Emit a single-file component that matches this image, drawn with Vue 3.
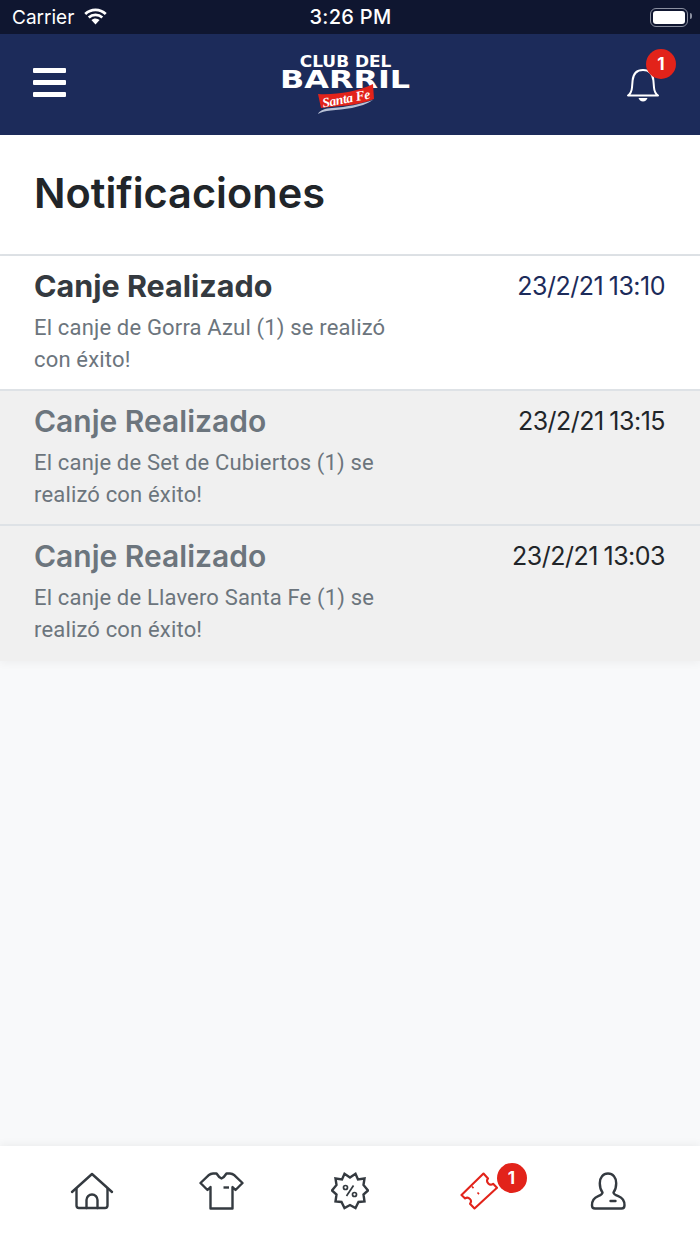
<template>
  <div class="screen">
    <div class="status">
      <div class="status-left">
        <span>Carrier</span>
        <svg width="27" height="18" viewBox="0 0 26 18"><path d="M13 3.200c3.600 0 6.900 1.400 9.300 3.700l1.900-2A16.400 16.400 0 0 0 13 .4 16.400 16.400 0 0 0 1.800 4.900l1.900 2A13.500 13.500 0 0 1 13 3.200z" fill="#fff"/><path d="M13 8.300c2.200 0 4.200.8 5.800 2.200l1.900-2A11.400 11.400 0 0 0 13 5.500a11.400 11.400 0 0 0-7.700 3l1.900 2A8.600 8.600 0 0 1 13 8.300z" fill="#fff"/><path d="M13 10.600c-1.600 0-3 .6-4.100 1.500l4.100 4.300 4.100-4.300A6.200 6.200 0 0 0 13 10.600z" fill="#fff"/></svg>
      </div>
      <span class="status-time">3:26 PM</span>
      <div class="battery"><div class="battery-fill" /><i class="battery-nub" /></div>
    </div>

    <header class="topbar">
      <div class="burger"><i /><i /><i /></div>
      <div class="logo">
        <div class="logo-small">CLUB DEL</div>
        <div class="logo-big">BARRIL</div>
        <div class="logo-flag">
          <svg width="58" height="31" viewBox="0 0 58 31">
            <path d="M1 10 C18 11 40 8 56 0 L57 15 C42 22 18 22 4 24 Z" fill="#e2231a" />
            <path d="M1 30 C3 26 8 24.500 15 24 C30 23 44 20 56 16 C44 24 26 25.500 14 26.500 C8 27 4 28 1 30 Z" fill="#b9c2d6" />
          </svg>
          <span class="logo-santa">Santa Fe</span>
        </div>
      </div>
      <div class="bell">
        <svg width="36" height="38" viewBox="0 0 36 38" fill="none">
          <path d="M3 30.500h30c-2.600-1.800-3.700-4-4-8l-.6-7C27.800 9 24 5 18 5S8.200 9 7.600 15.500l-.6 7c-.3 4-1.400 6.200-4 8z" stroke="#fff" stroke-width="2" stroke-linejoin="round" />
          <path d="M13.500 33h9c-.5 2-2.300 3.400-4.500 3.400s-4-1.400-4.500-3.400z" fill="#fff" />
        </svg>
        <span class="badge bell-badge">1</span>
      </div>
    </header>

    <div class="title-box">
      <h1>Notificaciones</h1>
    </div>

    <div class="list">
      <div v-for="n in notifications" :key="n.date" :class="['item', { read: n.read }]">
        <div class="item-text">
          <div class="item-title">{{ n.title }}</div>
          <div class="item-body">{{ n.body }}</div>
        </div>
        <div class="item-date">{{ n.date }}</div>
      </div>
    </div>

    <div class="spacer" />

    <nav class="tabs">
      <div class="tab">
        <svg width="44" height="38" viewBox="0 0 44 38" fill="none" stroke="#343a40" stroke-width="2.400" stroke-linecap="round" stroke-linejoin="round">
          <path d="M2 20 22 2l20 18" />
          <path d="M6.500 17v16.500c0 1.500 1 2.500 2.500 2.500h26c1.500 0 2.500-1 2.500-2.500V17" />
          <path d="M16.500 36v-8a5.500 5.500 0 0 1 11 0v8" />
        </svg>
      </div>
      <div class="tab">
        <svg width="45" height="38" viewBox="0 0 45 38" fill="none" stroke="#343a40" stroke-width="2.400" stroke-linejoin="round">
          <path d="M14 1.500h3.500c1 1.600 2.800 4 5 5 2.200-1 4-3.400 5-5H31c1.800 0 3 .6 4.500 1.800L43.500 11 36.500 18l-3-3v21.500h-22V15l-3 3L1.500 11l8-7.700C11 2.100 12.200 1.500 14 1.500z" />
          <path d="M24.500 15.500h5.500" stroke-width="2.400" />
        </svg>
      </div>
      <div class="tab">
        <svg width="38" height="38" viewBox="0 0 38 38" fill="none" stroke="#343a40" stroke-width="2.400" stroke-linejoin="miter">
          <path d="M19 5.500 24.500 1.800 27 7.500 33.500 6.500 32.500 13 37 18.500 32.500 22.500 33.500 29.500 27.500 30 24.500 36 19 33 13.500 36 10.500 30 4.500 29.500 5.500 22.500 1 18.500 5.500 13 4.500 6.500 11 7.500 13.500 1.800Z" />
          <path d="m15.500 24 7-10.500" stroke-width="1.700" />
          <circle cx="14.500" cy="15.500" r="2" stroke-width="1.700" />
          <circle cx="23.500" cy="22.500" r="2" stroke-width="1.700" />
        </svg>
      </div>
      <div class="tab">
        <svg width="38" height="38" viewBox="0 0 38 38" fill="none" stroke="#e2231a" stroke-width="2.100" stroke-linejoin="round">
          <path d="M1.500 23 23.500 1.500l4.500 5c-1.400 1.700-1.200 3.400.3 4.900 1.400 1.400 3.100 1.600 4.800.4l3.900 4L14.500 36.500 10 31.800c1.400-1.700 1.300-3.400-.1-4.900-1.400-1.400-3.100-1.600-4.800-.5z" />
          <path d="m12 14.500 1.500 1.600M17.500 20.500l1.500 1.600" stroke-width="1.600" />
        </svg>
        <span class="badge tab-badge">1</span>
      </div>
      <div class="tab">
        <svg width="36" height="38" viewBox="0 0 36 38" fill="none" stroke="#343a40" stroke-width="2.400" stroke-linecap="round" stroke-linejoin="round">
          <path d="M12.500 20.500C11 18.500 9.800 15 9.800 11.200 9.800 5.500 13 1.500 18 1.500s8.200 4 8.200 9.700c0 3.800-1.200 7.300-2.700 9.300 0 1.800 2 2.600 4.800 3.700 3.700 1.500 6.200 4.600 6.200 9 0 2.200-1 3.300-3 3.300H5c-2 0-3-1.100-3-3.300 0-4.400 2.500-7.500 6.200-9 2.800-1.100 4.300-1.900 4.300-3.700z" />
          <path d="M20.500 29h5" stroke-width="2.400" />
        </svg>
      </div>
    </nav>
  </div>
</template>

<script setup>
const notifications = [
  { title: 'Canje Realizado', body: 'El canje de Gorra Azul (1) se realizó con éxito!', date: '23/2/21 13:10', read: false },
  { title: 'Canje Realizado', body: 'El canje de Set de Cubiertos (1) se realizó con éxito!', date: '23/2/21 13:15', read: true },
  { title: 'Canje Realizado', body: 'El canje de Llavero Santa Fe (1) se realizó con éxito!', date: '23/2/21 13:03', read: true },
];
</script>

<style>
html, body { margin: 0; background: #f8f9fa; }
</style>

<style scoped>
.screen {
  width: 700px; height: 1244px;
  display: flex; flex-direction: column;
  background: #f8f9fa;
  font-family: Roboto, "Noto Sans", sans-serif;
  overflow: hidden;
}
.status {
  height: 34px; flex: none;
  background: #0f1630;
  color: #fff;
  display: grid;
  grid-template-columns: 1fr auto 1fr;
  align-items: center;
  padding: 0 9px 0 12px;
  font-family: Inter, sans-serif;
  font-size: 19px;
}
.status-left { display: flex; align-items: center; gap: 8px; }
.status-time { font-weight: 500; font-size: 20px; letter-spacing: .3px; margin-left: -2px; }
.battery {
  justify-self: end;
  position: relative;
  width: 38px; height: 19px;
  margin-right: 3px;
  border: 1.500px solid #8b90a0;
  border-radius: 6px;
  padding: 2px;
  box-sizing: border-box;
}
.battery-fill { height: 100%; background: #fff; border-radius: 3px; }
.battery-nub {
  position: absolute; right: -5px; top: 4px;
  width: 2px; height: 6px;
  background: #8b90a0;
  border-radius: 0 2px 2px 0;
}
.topbar {
  height: 101px; flex: none;
  background: #1c2b5a;
  display: flex; align-items: center; justify-content: space-between;
  padding: 0 33px;
  box-sizing: border-box;
}
.burger { width: 33px; display: flex; flex-direction: column; gap: 7px; margin-top: -4px; }
.burger i { display: block; height: 5px; background: #fff; border-radius: 1px; }
.logo {
  width: 130px;
  height: 62px;
  margin-top: 2px;
  display: flex; flex-direction: column; align-items: center;
  color: #fff;
  font-family: "DejaVu Sans", sans-serif;
  font-weight: 700;
  position: relative;
}
.logo-small { font-size: 15px; line-height: 15px; transform: scaleX(1.130); }
.logo-big { font-size: 24.500px; line-height: 20px; transform: scaleX(1.300); }
.logo-flag { position: absolute; left: 36px; top: 29px; width: 58px; height: 31px; }
.logo-santa {
  position: absolute; left: 5px; top: 7px;
  font-family: "Liberation Serif", serif;
  font-style: italic;
  font-size: 13.500px;
  letter-spacing: -.3px;
  white-space: nowrap;
  transform: rotate(-11deg);
}
.bell { position: relative; width: 36px; height: 38px; margin-right: 6px; margin-top: -2px; }
.badge {
  position: absolute;
  width: 30px; height: 30px;
  border-radius: 50%;
  background: #e2231a;
  color: #fff;
  font-family: Inter, sans-serif;
  font-weight: 700;
  font-size: 17px;
  display: flex; align-items: center; justify-content: center;
}
.bell-badge { left: 21px; top: -16px; }
.title-box {
  height: 121px; flex: none;
  background: #fff;
  border-bottom: 2px solid #dee2e6;
  box-sizing: border-box;
  padding: 0 34px 2px;
  display: flex; align-items: center;
}
h1 { margin: 0; font-family: Inter, sans-serif; font-size: 41.500px; font-weight: 600; color: #212529; line-height: 1; }
.list { box-shadow: 0 3px 8px rgba(0,0,0,.04); }
.item {
  height: 135px;
  box-sizing: border-box;
  padding: 12px 35px 0 34px;
  display: flex; justify-content: space-between;
  background: #fff;
  border-bottom: 2px solid #dee2e6;
}
.item:last-child { border-bottom: 0; }
.item.read { background: #f0f0f0; }
.item-text { width: 365px; }
.item-title { font-family: Inter, sans-serif; font-size: 30.500px; font-weight: 700; line-height: 36px; color: #343a40; }
.read .item-title { color: #6c757d; font-weight: 600; font-size: 30px; }
.item-body { margin-top: 8px; font-size: 22px; line-height: 32px; color: #6c757d; letter-spacing: .17px; }
.item-date { font-family: Inter, sans-serif; font-size: 25px; line-height: 36px; color: #212529; letter-spacing: -.5px; word-spacing: -1px; }
.item:first-child .item-date { color: #1c2b5a; }
.spacer { flex: 1; }
.tabs {
  height: 98px; flex: none;
  background: #fff;
  display: grid;
  grid-template-columns: repeat(5, 129px);
  justify-content: center;
  padding: 26px 0 0 0;
  box-sizing: border-box;
  box-shadow: 0 -2px 8px rgba(0,0,0,.05);
}
.tab { position: relative; display: flex; justify-content: center; align-items: flex-start; }
.tab-badge { left: 82px; top: -9px; }
</style>
